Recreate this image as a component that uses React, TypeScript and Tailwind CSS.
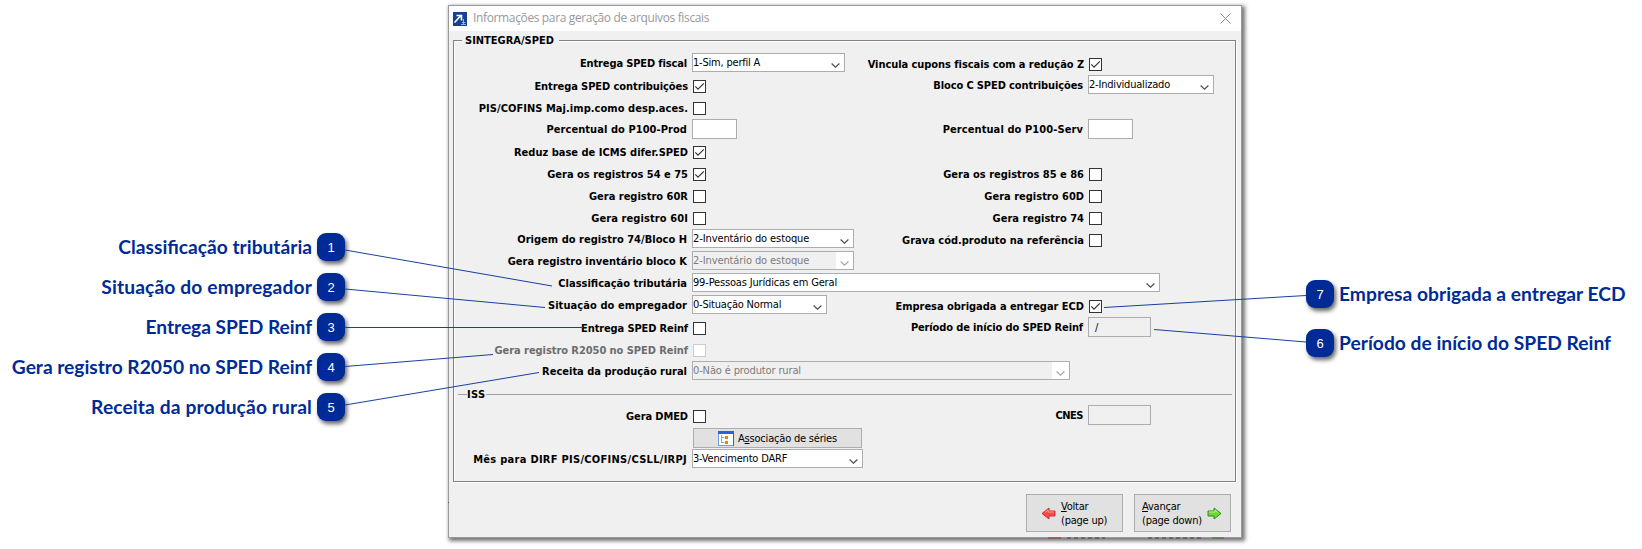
import { clsx } from "clsx";

const text = "whitespace-nowrap leading-none";

function Chevron({ disabled }: { disabled?: boolean }) {
  return (
    <span className="flex h-full w-[17px] shrink-0 justify-center bg-white pt-[9px]">
      <svg width="9" height="5" viewBox="0 0 9 5" fill="none">
        <path d="M.6.5 4.5 4.2 8.4.5" stroke={disabled ? "#a8a8a8" : "#505050"} strokeWidth="1.2" />
      </svg>
    </span>
  );
}

function Combo({ value, width, track, disabled }: { value: string; width: string; track?: string; disabled?: boolean }) {
  return (
    <div
      className={clsx(
        "flex h-[19px] shrink-0 border border-[#abadb3]",
        width,
        disabled ? "bg-[#f0f0f0] text-[#7b7b7b]" : "bg-white text-black"
      )}
    >
      <span className={clsx(text, "flex-1 pt-[3px]", track ?? "tracking-[-0.2px]")}>{value}</span>
      <Chevron disabled={disabled} />
    </div>
  );
}

function Check({ checked, disabled }: { checked?: boolean; disabled?: boolean }) {
  return (
    <span
      className={clsx(
        "mt-[5px] ml-px flex size-[13px] shrink-0 items-center justify-center border bg-white",
        disabled ? "border-[#cccccc]" : "border-[#333333]"
      )}
    >
      {checked && (
        <svg width="11" height="11" viewBox="0 0 11 11" fill="none">
          <path d="M1.3 5.4 4 8.1 9.8 2.3" stroke="#333" strokeWidth="1.2" />
        </svg>
      )}
    </span>
  );
}

function Input({ width, value }: { width: string; value?: string }) {
  return (
    <div className={clsx("h-5 shrink-0 border border-[#abadb3] pt-1 pl-1.5 leading-none", width)}>{value}</div>
  );
}

type Field = {
  label: string;
  track?: string;
  kind: "combo" | "check" | "input";
  value?: string;
  valueTrack?: string;
  width?: string;
  checked?: boolean;
  disabled?: boolean;
};

const ROWS: [Field | null, Field | null][] = [
  [
    { label: "Entrega SPED fiscal", track: "tracking-[-0.14px]", kind: "combo", value: "1-Sim, perfil A", width: "w-[153px]" },
    { label: "Vincula cupons fiscais com a redução Z", track: "tracking-[-0.06px]", kind: "check", checked: true },
  ],
  [
    { label: "Entrega SPED contribuições", track: "tracking-[-0.08px]", kind: "check", checked: true },
    {
      label: "Bloco C SPED contribuições",
      track: "tracking-[-0.12px]",
      kind: "combo",
      value: "2-Individualizado",
      valueTrack: "tracking-[-0.2px]",
      width: "w-[126px]",
    },
  ],
  [{ label: "PIS/COFINS Maj.imp.como desp.aces.", track: "tracking-[0.05px]", kind: "check" }, null],
  [
    { label: "Percentual do P100-Prod", track: "tracking-[0.06px]", kind: "input", width: "w-[45px] bg-white" },
    { label: "Percentual do P100-Serv", track: "tracking-[0.09px]", kind: "input", width: "w-[45px] bg-white" },
  ],
  [{ label: "Reduz base de ICMS difer.SPED", kind: "check", checked: true }, null],
  [
    { label: "Gera os registros 54 e 75", kind: "check", checked: true },
    { label: "Gera os registros 85 e 86", kind: "check" },
  ],
  [
    { label: "Gera registro 60R", kind: "check" },
    { label: "Gera registro 60D", kind: "check" },
  ],
  [
    { label: "Gera registro 60I", track: "tracking-[0.1px]", kind: "check" },
    { label: "Gera registro 74", kind: "check" },
  ],
  [
    {
      label: "Origem do registro 74/Bloco H",
      track: "tracking-[0.03px]",
      kind: "combo",
      value: "2-Inventário do estoque",
      valueTrack: "tracking-[-0.1px]",
      width: "w-[162px]",
    },
    { label: "Grava cód.produto na referência", kind: "check" },
  ],
  [
    {
      label: "Gera registro inventário bloco K",
      kind: "combo",
      value: "2-Inventário do estoque",
      valueTrack: "tracking-[-0.1px]",
      width: "w-[162px]",
      disabled: true,
    },
    null,
  ],
  [
    {
      label: "Classificação tributária",
      kind: "combo",
      value: "99-Pessoas Jurídicas em Geral",
      valueTrack: "tracking-[-0.17px]",
      width: "w-[468px]",
    },
    null,
  ],
  [
    { label: "Situação do empregador", track: "tracking-[0.08px]", kind: "combo", value: "0-Situação Normal", width: "w-[135px]" },
    { label: "Empresa obrigada a entregar ECD", track: "tracking-[-0.03px]", kind: "check", checked: true },
  ],
  [
    { label: "Entrega SPED Reinf", track: "tracking-[-0.13px]", kind: "check" },
    { label: "Período de início do SPED Reinf", track: "tracking-[-0.13px]", kind: "input", value: "/", width: "w-[63px]" },
  ],
  [{ label: "Gera registro R2050 no SPED Reinf", track: "tracking-[-0.06px]", kind: "check", disabled: true }, null],
  [
    {
      label: "Receita da produção rural",
      kind: "combo",
      value: "0-Não é produtor rural",
      valueTrack: "tracking-[-0.13px]",
      width: "w-[378px]",
      disabled: true,
    },
    null,
  ],
];

const ISS_ROW: [Field, Field] = [
  { label: "Gera DMED", track: "tracking-[-0.1px]", kind: "check" },
  { label: "CNES", track: "tracking-[-0.5px]", kind: "input", width: "w-[63px]" },
];

const DIRF: Field = {
  label: "Mês para DIRF PIS/COFINS/CSLL/IRPJ",
  track: "tracking-[0.28px]",
  kind: "combo",
  value: "3-Vencimento DARF",
  width: "w-[171px]",
};

function FieldCell({ field }: { field: Field | null }) {
  if (!field) return null;
  const isCheck = field.kind === "check";
  return (
    <div className="flex">
      <div
        className={clsx(
          text,
          "flex w-[238px] shrink-0 justify-end font-bold",
          isCheck ? "pt-[6px] pr-1" : "pt-[5px] pr-[5px]",
          isCheck && field.disabled ? "text-[#6d6d6d]" : "text-black",
          field.track
        )}
      >
        {field.label}
      </div>
      {field.kind === "combo" && (
        <Combo value={field.value!} width={field.width!} track={field.valueTrack} disabled={field.disabled} />
      )}
      {isCheck && <Check checked={field.checked} disabled={field.disabled} />}
      {field.kind === "input" && <Input width={field.width!} value={field.value} />}
    </div>
  );
}

function Row({ left, right }: { left: Field | null; right: Field | null }) {
  return (
    <div className="flex h-[22px]">
      <div className="w-[396px] shrink-0">
        <FieldCell field={left} />
      </div>
      <FieldCell field={right} />
    </div>
  );
}

function Badge({ n }: { n: number }) {
  return (
    <span className="flex size-7 shrink-0 items-center justify-center rounded-[9px] bg-[#002b96] font-['Liberation_Sans'] text-[13px] leading-none text-white shadow-[2px_3px_4px_rgba(0,0,0,0.6)]">
      {n}
    </span>
  );
}

const LEFT_CALLOUTS = [
  { n: 1, label: "Classificação tributária" },
  { n: 2, label: "Situação do empregador", track: "tracking-[0.14px]" },
  { n: 3, label: "Entrega SPED Reinf", track: "tracking-[-0.05px]" },
  { n: 4, label: "Gera registro R2050 no SPED Reinf", track: "tracking-[-0.02px]" },
  { n: 5, label: "Receita da produção rural", track: "tracking-[0.13px]" },
];

const RIGHT_CALLOUTS = [
  { n: 7, label: "Empresa obrigada a entregar ECD", track: "tracking-[0.03px]" },
  { n: 6, label: "Período de início do SPED Reinf", track: "tracking-[0.03px]" },
];

const calloutText = "font-[Lato] text-[19.2px] font-bold text-[#002b96] " + text;

function Arrow({ left }: { left?: boolean }) {
  return (
    <svg width="15" height="13" viewBox="0 0 15 13" className={clsx("shrink-0", left && "-scale-x-100")}>
      <path
        d="M1 4h6V1l7 5.5L7 12V9H1Z"
        fill={left ? "#f84848" : "#6fd83c"}
        stroke={left ? "#c83232" : "#2c8a1a"}
        strokeLinejoin="round"
      />
      <path d="M2 5h6V3l3 2.5" stroke={left ? "#ff9a9a" : "#b4f58c"} fill="none" />
    </svg>
  );
}

export default function App() {
  return (
    <div className="relative flex h-[549px] w-[1642px] overflow-hidden bg-white">
      <aside className="flex w-[448px] shrink-0 flex-col gap-3 pt-[233px]">
        {LEFT_CALLOUTS.map((c) => (
          <div key={c.n} className="flex w-[345px] items-center justify-end gap-[5px]">
            <span className={clsx(calloutText, "pb-px", c.track)}>{c.label}</span>
            <Badge n={c.n} />
          </div>
        ))}
      </aside>

      <main className="mt-[5px] flex h-[533px] w-[794px] shrink-0 flex-col border border-[#9a9a9a] bg-[#f0f0f0] font-['DejaVu_Sans_Condensed','DejaVu_Sans',sans-serif] text-[11px] text-black shadow-[2px_2px_4px_1px_rgba(0,0,0,0.55)]">
        <header className="flex h-[25px] shrink-0 items-center bg-white pl-1">
          <svg width="14" height="14" viewBox="0 0 14 14">
            <rect width="14" height="14" fill="#16418f" />
            <path d="M1.5 10.5 7.5 4M3.5 3.5h5v5" stroke="#fff" strokeWidth="1.6" fill="none" />
            <path d="M8 12.5h5M9 10.5h3.5M10.5 7v6" stroke="#8fb3e6" />
          </svg>
          <span className={clsx(text, "ml-1.5 flex-1 pb-px font-['Open_Sans'] text-[12px] tracking-[-0.36px] text-[#999]")}>
            Informações para geração de arquivos fiscais
          </span>
          <svg width="11" height="11" viewBox="0 0 11 11" className="mr-2.5">
            <path d="m.5.5 10 10m0-10-10 10" stroke="#8a8a8a" />
          </svg>
        </header>

        <section className="mt-[9px] ml-1 flex h-[442px] w-[783px] shrink-0 flex-col border border-[#828282] shadow-[1px_1px_0_#fff,inset_1px_1px_0_#fff]">
          <div className="-mt-2 h-5 pl-2">
            <h1 className={clsx(text, "inline-block bg-[#f0f0f0] pr-[5px] pl-[3px] font-bold")}>SINTEGRA/SPED</h1>
          </div>
          {ROWS.map(([left, right], i) => (
            <Row key={i} left={left} right={right} />
          ))}
          <div className="flex h-[22px] items-center pr-[3px] pl-1">
            <span className="h-px w-[9px] bg-[#a0a0a0]" />
            <h2 className={clsx(text, "font-bold tracking-[0.4px]")}>ISS</h2>
            <span className="h-px flex-1 bg-[#a0a0a0]" />
          </div>
          <Row left={ISS_ROW[0]} right={ISS_ROW[1]} />
          <div className="h-[22px] pt-px pl-[239px]">
            <button className="flex h-5 w-[169px] items-center justify-center gap-1 border border-[#adadad] bg-[#e1e1e1]">
              <svg width="16" height="15" viewBox="0 0 16 15">
                <rect x=".5" y=".5" width="15" height="14" fill="#fff" stroke="#6f9be8" />
                <path d="M0 0h16v3H0Z" fill="#2a62dc" />
                <path d="M15 3h1v12h-1Z" fill="#2a62dc" />
                <path d="M3.5 4v8M3.5 6.5h3M3.5 11.5h3" stroke="#a5a5a5" fill="none" />
                <path d="M7 5h3v3H7zM7 10h3v3H7z" fill="#f08010" />
              </svg>
              <span className={clsx(text, "tracking-[-0.2px]")}>A<u>s</u>sociação de séries</span>
            </button>
          </div>
          <Row left={DIRF} right={null} />
        </section>

        <footer className="mt-3 flex justify-end gap-[11px] pr-2.5 leading-[14px] tracking-[-0.22px]">
          <button className="flex h-[38px] w-[97px] items-center gap-[5px] border border-[#adadad] bg-[#e1e1e1] pl-3.5 text-left whitespace-nowrap">
            <Arrow left />
            <span className="pt-0.5"><u>V</u>oltar<br />(page up)</span>
          </button>
          <button className="flex h-[38px] w-[97px] items-center gap-[5px] border border-[#adadad] bg-[#e1e1e1] pl-[7px] text-left whitespace-nowrap">
            <span className="pt-0.5"><u>A</u>vançar<br />(page down)</span>
            <Arrow />
          </button>
        </footer>
      </main>

      <aside className="flex flex-col gap-[21px] pt-[280px] pl-16">
        {RIGHT_CALLOUTS.map((c) => (
          <div key={c.n} className="flex items-center gap-[5px]">
            <Badge n={c.n} />
            <span className={clsx(calloutText, "pb-px", c.track)}>{c.label}</span>
          </div>
        ))}
      </aside>

      {/* Leader lines from the badges to the fields */}
      <svg className="pointer-events-none absolute inset-0" width="1642" height="549" stroke="#1a3fa0" fill="none">
        <path d="M345 250 552 286M345 289 545 307.5M345 327.5H583M345 366.5 493 354.5M345 405 539 372.5M1306 295.5 1104 307.5M1306 342 1154 329.5" />
        {/* Edge of the window behind */}
        <path d="M1048 538h13" stroke="#8c3a30" />
        <path d="M1067 538h38M1148 538h56" stroke="#444" strokeDasharray="4 3" />
        <path d="M1212 538h12" stroke="#3f6a38" />
        <path d="M448 502.5h1" stroke="#555" />
      </svg>
    </div>
  );
}
